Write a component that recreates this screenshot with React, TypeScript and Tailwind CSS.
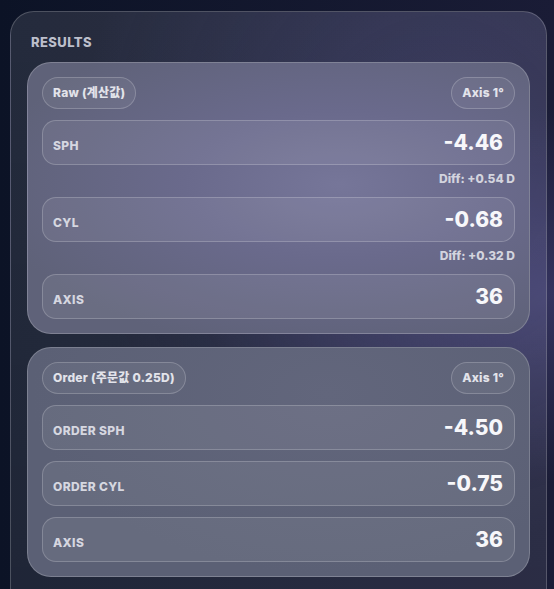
import type { ReactNode } from "react";

// Results panel: glass cards with raw and order values.

const FONT = { fontFamily: 'Inter, "Noto Sans CJK KR", "Noto Sans", sans-serif' };

type Row = { label: string; value: string; diff?: string };

const RAW: Row[] = [
  { label: "SPH", value: "-4.46", diff: "Diff: +0.54 D" },
  { label: "CYL", value: "-0.68", diff: "Diff: +0.32 D" },
  { label: "AXIS", value: "36" },
];

const ORDER: Row[] = [
  { label: "ORDER SPH", value: "-4.50" },
  { label: "ORDER CYL", value: "-0.75" },
  { label: "AXIS", value: "36" },
];

function Pill({ children }: { children: ReactNode }) {
  return (
    <span className="flex h-8 items-center rounded-full border border-white/20 bg-white/[0.06] px-[10px] text-[12px] font-extrabold tracking-[0.02em] text-[#e2e3ea]">
      {children}
    </span>
  );
}

function ValueRow({ row }: { row: Row }) {
  return (
    <div>
      <div className="flex h-[45px] items-center rounded-[14px] border border-white/20 bg-white/[0.07] pl-[10px] pr-[11px]">
        <div className="flex w-full items-baseline justify-between">
          <span className="text-[12px] font-extrabold tracking-[0.03em] text-[#d6d7e0]">{row.label}</span>
          <span className="text-[21px] font-extrabold leading-[28px] text-[#f7f7fa]">{row.value}</span>
        </div>
      </div>
      {row.diff && (
        <div className="mt-[7px] text-right text-[12px] font-extrabold leading-[14px] text-[#d3d4de]">
          {row.diff}
        </div>
      )}
    </div>
  );
}

function Group({ title, rows, bg }: { title: string; rows: Row[]; bg: string }) {
  return (
    <div className={`flex flex-col gap-[11px] rounded-[24px] border border-white/20 p-[14px] ${bg}`}>
      <div className="flex items-center justify-between">
        <Pill>{title}</Pill>
        <Pill>Axis 1°</Pill>
      </div>
      {rows.map((r) => (
        <ValueRow key={r.label} row={r} />
      ))}
    </div>
  );
}

export default function App() {
  return (
    <div
      className="h-[589px] w-full overflow-hidden bg-[radial-gradient(ellipse_at_100%_50%,#34335e_0%,transparent_45%),linear-gradient(to_right,#0c1326,#1a1c36)] pl-[10px] pt-[11px]"
      style={FONT}
    >
      <div className="w-[537px] rounded-[24px] border border-white/20 bg-[radial-gradient(ellipse_at_80%_25%,rgba(110,105,190,0.22),transparent_60%),linear-gradient(rgba(255,255,255,0.1),rgba(255,255,255,0.08))] px-4 pb-10 pt-[22px]">
        <div className="mb-3 pl-1 text-[13px] font-extrabold leading-4 tracking-[0.03em] text-[#bcbfcb]">
          RESULTS
        </div>
        <div className="flex flex-col gap-[13px]">
          <Group
            title="Raw (계산값)"
            rows={RAW}
            bg="bg-[radial-gradient(ellipse_at_62%_45%,#767699_0%,#6a6a8c_35%,#5f6279_80%)]"
          />
          <Group
            title="Order (주문값 0.25D)"
            rows={ORDER}
            bg="bg-[radial-gradient(ellipse_at_60%_20%,#62667c_0%,#5b6075_70%)]"
          />
        </div>
      </div>
    </div>
  );
}
